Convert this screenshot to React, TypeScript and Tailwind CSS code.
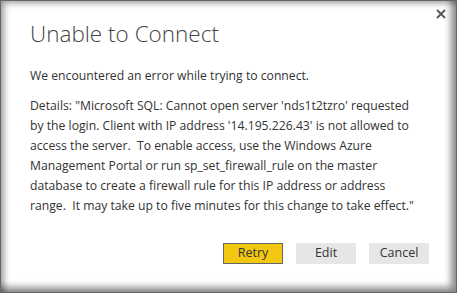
const lines = [
  `Details: "Microsoft SQL: Cannot open server 'nds1t2tzro' requested`,
  `by the login. Client with IP address '14.195.226.43' is not allowed to`,
  `access the server.  To enable access, use the Windows Azure`,
  `Management Portal or run sp_set_firewall_rule on the master`,
  `database to create a firewall rule for this IP address or address`,
  `range.  It may take up to five minutes for this change to take effect."`,
];

function CloseIcon() {
  return (
    <svg width="10" height="10" viewBox="0 0 10 10" className="text-[#555]">
      <path d="M1 1 L9 9 M9 1 L1 9" stroke="currentColor" strokeWidth="1.8" />
    </svg>
  );
}

export default function App() {
  return (
    <div
      className="relative w-[457px] h-[293px] bg-white overflow-hidden text-[#333] shadow-[inset_0_0_0_1px_#666,inset_4px_3px_6px_rgba(0,0,0,0.4),inset_-6px_-6px_7px_rgba(0,0,0,0.45)]"
      style={{ fontFamily: '"Open Sans", "Noto Sans", sans-serif' }}
    >
      <button className="absolute top-[8px] right-[10px] p-[1px]">
        <CloseIcon />
      </button>

      <div className="pl-[30px] pt-[19px]">
        <h1 className="text-[22.5px] font-light leading-[30px] text-[#444]">Unable to Connect</h1>

        <p className="mt-[17px] text-[12.2px] leading-[20px] whitespace-nowrap">
          We encountered an error while trying to connect.
        </p>

        <div className="mt-[10px] text-[12.2px] leading-[20px] whitespace-pre">
          {lines.map((l) => (
            <div key={l}>{l}</div>
          ))}
        </div>

        <div className="flex justify-end gap-[13px] pr-[28px] mt-[27px]">
          <button className="w-[60px] h-[21px] bg-[#f2c811] border border-[#666] text-[12.5px] leading-none">
            Retry
          </button>
          <button className="w-[60px] h-[21px] bg-[#e6e6e6] text-[12.5px] leading-none">Edit</button>
          <button className="w-[60px] h-[21px] bg-[#e6e6e6] text-[12.5px] leading-none">Cancel</button>
        </div>
      </div>
    </div>
  );
}
